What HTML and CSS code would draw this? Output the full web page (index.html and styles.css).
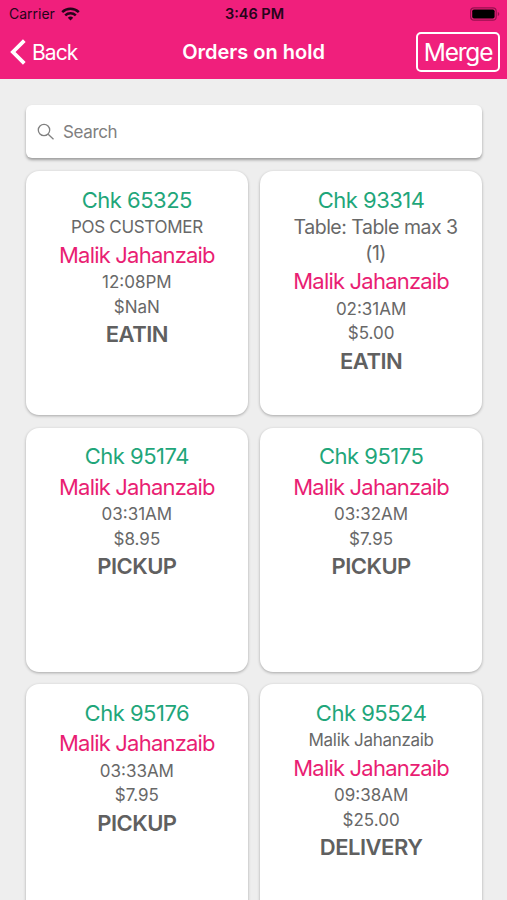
FILE: index.html
```html
<!DOCTYPE html>
<html lang="en">
  <head>
    <meta charset="utf-8">
    <title>Orders on hold</title>
    <link rel="stylesheet" href="styles.css">
  </head>
  <body>
    <header class="header">
      <div class="status">
        <div class="carrier">
          <span>Carrier</span>
          <svg width="19" height="14" viewBox="0 0 19 14" fill="none" stroke="#26041a" stroke-width="2.5">
            <path d="M1.2 5.2a12 12 0 0 1 16.6 0"/>
            <path d="M4.2 8.4a7.7 7.7 0 0 1 10.6 0"/>
            <path d="M6.8 10.8a3.9 3.9 0 0 1 5.4 0L9.5 13.5z" fill="#26041a" stroke="none"/>
          </svg>
        </div>
        <div class="clock">3:46 PM</div>
        <svg class="battery" width="30" height="14" viewBox="0 0 30 14">
          <rect x="0.6" y="0.8" width="25.6" height="12.4" rx="3.5" fill="none" stroke="#98104f" stroke-width="1.2"/>
          <rect x="2.2" y="2.4" width="22.4" height="9.2" rx="1.8" fill="#000"/>
          <path d="M27.8 5v4q1.5-.6 1.5-2t-1.5-2z" fill="#98104f"/>
        </svg>
      </div>
      <div class="nav">
        <div class="back">
          <svg width="16" height="26" viewBox="0 0 16 26" fill="none" stroke="#fff" stroke-width="3.8">
            <path d="M14.3 1.7L2.9 13l11.4 11.3"/>
          </svg>
          <span>Back</span>
        </div>
        <h1>Orders on hold</h1>
        <div class="merge"><span>Merge</span></div>
      </div>
    </header>

    <div class="search">
      <svg width="18" height="18" viewBox="0 0 18 18" fill="none" stroke="#808080" stroke-width="1.3">
        <circle cx="7" cy="7" r="5.7"/>
        <path d="M11.2 11.2l5.3 5"/>
      </svg>
      <span>Search</span>
    </div>

    <div class="orders">
      <div class="card">
        <p class="check">Chk 65325</p>
        <p class="customer">POS CUSTOMER</p>
        <p class="name">Malik Jahanzaib</p>
        <p>12:08PM</p>
        <p>$NaN</p>
        <p class="type">EATIN</p>
      </div>
      <div class="card">
        <p class="check">Chk 93314</p>
        <p class="table">Table: Table max 3 (1)</p>
        <p class="name">Malik Jahanzaib</p>
        <p>02:31AM</p>
        <p>$5.00</p>
        <p class="type">EATIN</p>
      </div>
      <div class="card">
        <p class="check">Chk 95174</p>
        <p class="name">Malik Jahanzaib</p>
        <p>03:31AM</p>
        <p>$8.95</p>
        <p class="type">PICKUP</p>
      </div>
      <div class="card">
        <p class="check">Chk 95175</p>
        <p class="name">Malik Jahanzaib</p>
        <p>03:32AM</p>
        <p>$7.95</p>
        <p class="type">PICKUP</p>
      </div>
      <div class="card">
        <p class="check">Chk 95176</p>
        <p class="name">Malik Jahanzaib</p>
        <p>03:33AM</p>
        <p>$7.95</p>
        <p class="type">PICKUP</p>
      </div>
      <div class="card">
        <p class="check">Chk 95524</p>
        <p class="customer">Malik Jahanzaib</p>
        <p class="name">Malik Jahanzaib</p>
        <p>09:38AM</p>
        <p>$25.00</p>
        <p class="type">DELIVERY</p>
      </div>
    </div>
  </body>
</html>
```

FILE: styles.css
```css
* {
  box-sizing: border-box;
}

body {
  margin: 0;
  height: 900px;
  overflow: hidden;
  background-color: #eeeeee;
  font-family: Inter, "Liberation Sans", sans-serif;
}

svg {
  display: block;
}

.header {
  height: 79px;
  background-color: #f01f7c;
  color: white;
}

.status {
  display: grid;
  grid-template-columns: 1fr auto 1fr;
  align-items: center;
  height: 27px;
  padding: 0 7px 0 9px;
  color: #26041a;
  font-size: 14px;
}

.carrier {
  display: flex;
  align-items: center;
  gap: 6px;
}

.clock {
  font-size: 14.5px;
  font-weight: 600;
}

.battery {
  justify-self: end;
}

.nav {
  display: grid;
  grid-template-columns: 1fr auto 1fr;
  align-items: center;
  height: 50px;
  padding: 0 7px 0 10px;
}

.back {
  display: flex;
  align-items: center;
  gap: 6px;
  font-size: 21px;
  letter-spacing: -0.9px;
}

h1 {
  margin: 0 3px 0 0;
  font-size: 20px;
  font-weight: 600;
}

.merge {
  justify-self: end;
  display: flex;
  align-items: center;
  justify-content: center;
  width: 84px;
  height: 40px;
  border: 2.5px solid white;
  border-radius: 5px;
  font-size: 24.5px;
  letter-spacing: -1.2px;
}

.search {
  display: flex;
  align-items: center;
  gap: 8px;
  height: 53px;
  margin: 26px 25px 13px 26px;
  padding-left: 11px;
  border-radius: 6px;
  background-color: white;
  box-shadow: 0 2px 3px rgba(0, 0, 0, 0.35);
  color: #808080;
  font-size: 17px;
  letter-spacing: -0.35px;
}

.orders {
  display: grid;
  grid-template-columns: 1fr 1fr;
  grid-auto-rows: 244px;
  gap: 12.5px;
  margin: 0 25px 0 26px;
}

.card {
  padding: 13.5px 20px 0;
  border-radius: 13px;
  background-color: white;
  box-shadow: 0 1px 3px rgba(0, 0, 0, 0.3);
  text-align: center;
}

.card p {
  margin: 0;
  color: #686868;
  font-size: 17px;
  line-height: 24.5px;
}

.card .customer {
  letter-spacing: -0.3px;
}

.card .check,
.card .name,
.card .type {
  font-size: 22px;
  line-height: 30.5px;
}

.card .check {
  color: #1fa67a;
  letter-spacing: -0.5px;
}

.card .name {
  color: #e91e73;
  letter-spacing: -0.8px;
}

.card .type {
  color: #606060;
  font-weight: 600;
  letter-spacing: -0.5px;
}

.card .table {
  padding-left: 9px;
  font-size: 19.5px;
  line-height: 25.5px;
  letter-spacing: -0.5px;
}
```
